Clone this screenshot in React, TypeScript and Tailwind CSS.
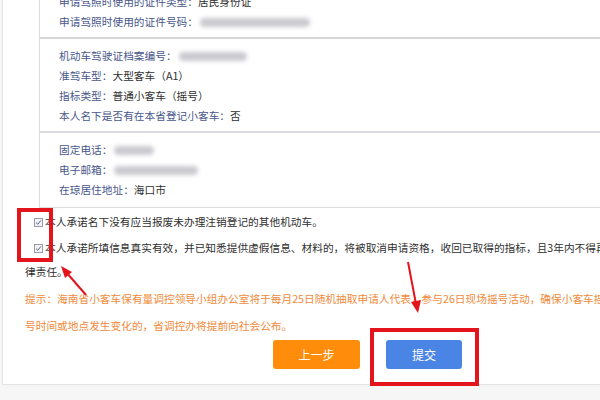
import React from 'react';

const font = { fontFamily: '"Noto Sans CJK SC", "Microsoft YaHei", sans-serif' };

function Row({ label, value, blur }: { label: string; value?: string; blur?: string }) {
    return (
        <div className="flex items-center h-[20px] whitespace-nowrap">
            <span className="text-[#48578a]">{label}：</span>
            {value && <span className="text-[#2f2f2f]">{value}</span>}
            {blur && <span className={`${blur} h-[9px] rounded-full bg-[#c9c9cf] blur-[2px]`} />}
        </div>
    );
}

function Check() {
    return (
        <span className="w-[9px] h-[9px] border border-[#9a9aa8] bg-[#f3f3f6] flex items-center justify-center shrink-0">
            <svg viewBox="0 0 10 10" className="w-[7px] h-[7px]">
                <path d="M1.5 5.2 L4 7.5 L8.5 2" fill="none" stroke="#55607f" strokeWidth="1.4" />
            </svg>
        </span>
    );
}

export default function App() {
    return (
        <div className="relative w-[600px] h-[400px] overflow-hidden bg-[#f6f6f6] text-[10.7px]" style={font}>
            <div className="ml-[2px] h-[385px] bg-white border-l border-b border-[#e3e3e6] overflow-hidden">

                {/* info panel */}
                <div className="ml-[36px] -mt-[8px] border-l border-b border-[#dcdce0]">
                    <div className="pl-[19px] pb-[5px] border-b-2 border-[#d6d6da]">
                        <Row label="申请驾照时使用的证件类型" value="居民身份证" />
                        <Row label="申请驾照时使用的证件号码" blur="w-[110px] ml-[2px]" />
                    </div>
                    <div className="pl-[19px] pt-[7px] pb-[5px] border-b-2 border-[#dcdce0]">
                        <Row label="机动车驾驶证档案编号" blur="w-[68px] ml-[2px]" />
                        <Row label="准驾车型" value="大型客车（A1）" />
                        <Row label="指标类型" value="普通小客车（摇号）" />
                        <Row label="本人名下是否有在本省登记小客车" value="否" />
                    </div>
                    <div className="pl-[19px] pt-[7px] pb-[7px]">
                        <Row label="固定电话" blur="w-[40px] ml-[2px]" />
                        <Row label="电子邮箱" blur="w-[84px] ml-[2px]" />
                        <Row label="在琼居住地址" value="海口市" />
                    </div>
                </div>

                {/* promises */}
                <div className="mt-[1px] text-[#2f2f2f] whitespace-nowrap">
                    <div className="flex items-center gap-[2px] h-[26px] pl-[31px]">
                        <Check />
                        <span>本人承诺名下没有应当报废未办理注销登记的其他机动车。</span>
                    </div>
                    <div className="flex items-center gap-[2px] h-[26px] pl-[31px]">
                        <Check />
                        <span>本人承诺所填信息真实有效，并已知悉提供虚假信息、材料的，将被取消申请资格，收回已取得的指标，且3年内不得再次申请，并承担相应的法</span>
                    </div>
                    <div className="h-[22px] flex items-center pl-[22px]">律责任。</div>
                </div>

                {/* hint */}
                <div className="mt-[3px] pl-[22px] text-[#f08a3a] whitespace-nowrap">
                    <div className="h-[27px] flex items-center">提示：海南省小客车保有量调控领导小组办公室将于每月25日随机抽取申请人代表，参与26日现场摇号活动，确保小客车摇号公开、公平、公正。如摇</div>
                    <div className="h-[27px] flex items-center">号时间或地点发生变化的，省调控办将提前向社会公布。</div>
                </div>

                {/* buttons */}
                <div className="flex pl-[270px] gap-[26px]">
                    <button className="w-[87px] h-[29px] rounded-[3px] bg-[#ff8c0a] text-white text-[12px]">上一步</button>
                    <button className="w-[76px] h-[29px] rounded-[3px] bg-[#4a84e4] text-white text-[12px]">提交</button>
                </div>
            </div>

            {/* red annotations */}
            <div className="absolute left-[17px] top-[208px] w-[36px] h-[54px] border-[4px] border-[#e3141b]" />
            <div className="absolute left-[370px] top-[328px] w-[109px] h-[58px] border-[4px] border-[#e3141b]" />
            <svg className="absolute left-0 top-0 w-[600px] h-[400px] pointer-events-none" viewBox="0 0 600 400">
                <line x1="86" y1="295" x2="66" y2="272" stroke="#e3141b" strokeWidth="2" />
                <polygon points="61,266 72,272 65,278" fill="#e3141b" />
                <line x1="408" y1="262" x2="416" y2="304" stroke="#e3141b" strokeWidth="2" />
                <polygon points="418,313 411,302 421,300" fill="#e3141b" />
            </svg>
        </div>
    );
}
